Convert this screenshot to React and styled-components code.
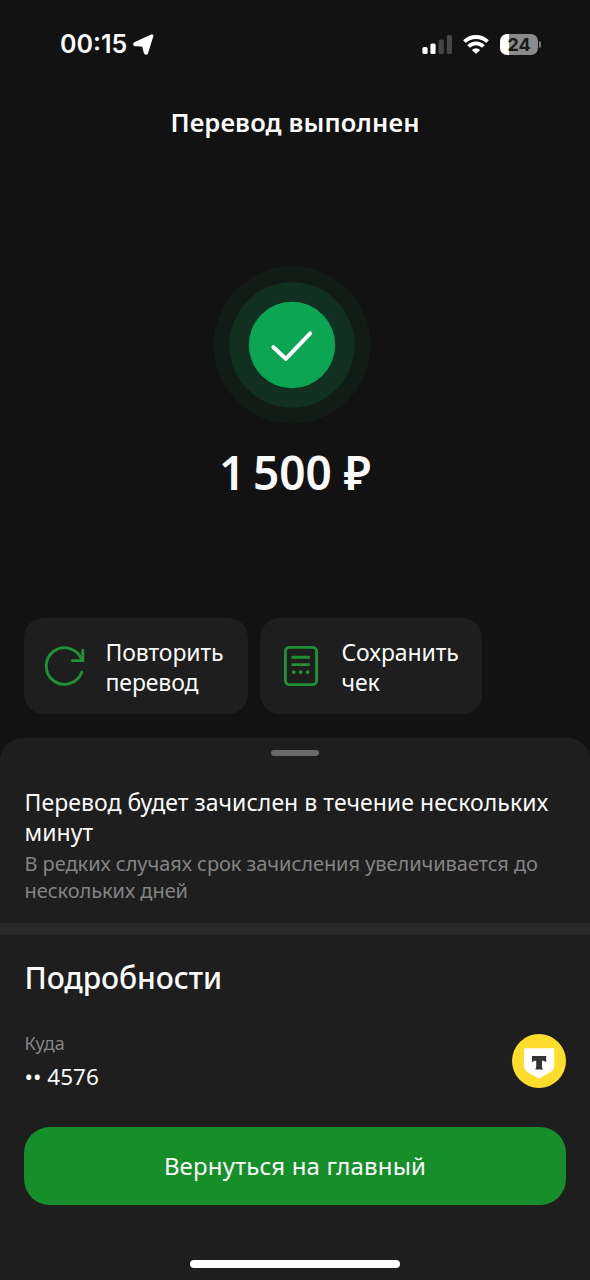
import styled, { createGlobalStyle } from 'styled-components';

const GlobalStyle = createGlobalStyle`
	:root {
		--page-color: #121212;
		--surface-color: #1e1e1e;
		--divider-color: #292929;
		--accent-color: #168f2a;
		--icon-color: #1f9134;
		--white-color: #fafafa;
		--muted-color: #848484;
	}

	* {
		box-sizing: border-box;
	}

	body {
		margin: 0;
		background-color: var(--page-color);
		font-family: 'Noto Sans', sans-serif;
	}
`;

const Screen = styled.div`
	display: flex;
	flex-direction: column;
	width: 590px;
	height: 1280px;
	overflow: hidden;
	color: var(--white-color);
	background-color: var(--page-color);
`;

const Text = styled.div`
	margin: 0;
	font-size: ${(props) => props.$size}px;
	line-height: ${(props) => props.$line}px;
	font-weight: ${(props) => props.$weight || 400};
	letter-spacing: ${(props) => props.$spacing || 0}px;
	color: ${(props) => (props.$muted ? 'var(--muted-color)' : 'inherit')};
	white-space: nowrap;
`;

const StatusBar = styled.div`
	display: flex;
	align-items: center;
	justify-content: space-between;
	height: 88px;
	padding: 0 49px 0 60px;
`;

const StatusGroup = styled.div`
	display: flex;
	align-items: center;
	gap: ${(props) => props.$gap}px;
`;

const Clock = styled(Text)`
	font-family: Inter, sans-serif;
`;

const Battery = styled.div`
	display: flex;
	align-items: center;
	gap: 1px;
`;

const BatteryBody = styled.div`
	width: 38px;
	height: 21px;
	border-radius: 7px;
	background: linear-gradient(90deg, #fff ${(props) => props.$level}%, #8b8b8b ${(props) => props.$level}%);
	color: #1a1a1a;
	font: 700 18px/21px Inter, sans-serif;
	text-align: center;
`;

const BatteryCap = styled.div`
	width: 2px;
	height: 7px;
	border-radius: 0 3px 3px 0;
	background-color: #777;
`;

const Header = styled.header`
	display: flex;
	justify-content: center;
	height: 178px;
	padding-top: 16px;
`;

const Result = styled.section`
	display: flex;
	flex-direction: column;
	align-items: center;
	height: 352px;
`;

const ResultBadge = styled.svg`
	margin-right: 6px;
`;

const Amount = styled(Text)`
	margin-top: 19px;
`;

const Actions = styled.div`
	display: flex;
	gap: 12px;
	height: 120px;
	padding: 0 24px 24px;
`;

const ActionButton = styled.button`
	display: flex;
	align-items: center;
	gap: 19.5px;
	width: ${(props) => props.$width}px;
	height: 96px;
	padding: 0 0 0 20px;
	border: none;
	border-radius: 20px;
	text-align: left;
	font-family: inherit;
	color: inherit;
	background-color: var(--surface-color);
	cursor: pointer;
`;

const ActionLabel = styled(Text)`
	padding-top: 2px;
`;

const Sheet = styled.main`
	display: flex;
	flex-direction: column;
	flex: 1;
	border-radius: 22px 22px 0 0;
	background-color: var(--surface-color);
`;

const Handle = styled.div`
	width: 48px;
	height: 6px;
	margin: 12px auto 0;
	border-radius: 3px;
	background-color: #6b6a6b;
`;

const Notice = styled.section`
	height: 167px;
	padding: 31px 24px 0 24.5px;
`;

const NoticeHint = styled.div`
	margin-top: 3px;
`;

const Divider = styled.div`
	height: 12px;
	background-color: var(--divider-color);
`;

const Details = styled.section`
	height: 192px;
	padding: 23px 24px 0 24.5px;
`;

const DetailRow = styled.div`
	display: flex;
	align-items: flex-start;
	justify-content: space-between;
	margin-top: 32px;
`;

const BankBadge = styled.svg`
	margin-top: 4px;
`;

const MainButton = styled.button`
	display: flex;
	align-items: center;
	justify-content: center;
	height: 78px;
	margin: 0 24px;
	padding: 0;
	border: none;
	border-radius: 26px;
	font-family: inherit;
	color: inherit;
	background-color: var(--accent-color);
	cursor: pointer;
`;

const HomeIndicator = styled.div`
	width: 210px;
	height: 8px;
	margin: auto auto 12px;
	border-radius: 4px;
	background-color: #fff;
`;

const LocationIcon = () => (
	<svg width="21" height="21" viewBox="0 0 20 20">
		<path
			d="M18 1.8 1.8 9.2c-.4.3-.3.9.2.9l7.6.6c.3 0 .5.2.5.5l1.7 6.7c.2.6.9.6 1.1.1Z"
			fill="#fff"
			stroke="#fff"
			strokeWidth="2.9"
			strokeLinejoin="round"
		/>
	</svg>
);

const SignalIcon = () => (
	<svg width="30" height="19" viewBox="0 0 30 19">
		<rect x="0.4" y="12" width="5.2" height="7" rx="1.6" fill="#fff" />
		<rect x="8.4" y="8.5" width="5.2" height="10.5" rx="1.6" fill="#fff" />
		<rect x="16.6" y="4.5" width="5.2" height="14.5" rx="1.6" fill="#464646" />
		<rect x="24.8" y="0" width="5.2" height="19" rx="1.6" fill="#464646" />
	</svg>
);

const WifiIcon = () => (
	<svg width="26" height="19" viewBox="0 0 26 19">
		<g fill="none" stroke="#fff" strokeWidth="3.9">
			<path d="M1.5 6.7a16.3 16.3 0 0 1 23 0" />
			<path d="M5.6 11.5a10.4 10.4 0 0 1 14.8 0" />
		</g>
		<path d="M13 18.9 8.9 14.9a5.8 5.8 0 0 1 8.2 0Z" fill="#fff" />
	</svg>
);

const RepeatIcon = () => (
	<svg width="42" height="42" viewBox="0 0 42 42" fill="none" stroke="var(--icon-color)" strokeWidth="2.9">
		<path d="M37.8 27A18.3 18.3 0 1 1 37.8 15" strokeLinecap="round" />
		<path d="M38.8 5.2V15.6H28.2" strokeLinecap="round" />
	</svg>
);

const ReceiptIcon = () => (
	<svg width="42" height="42" viewBox="0 0 42 42" fill="none" stroke="var(--icon-color)">
		<rect x="5.4" y="2.4" width="31.2" height="37.2" rx="4" strokeWidth="2.9" />
		<path d="M11.6 12.3h18.2M11.6 19.6h18.2" strokeWidth="2.9" />
		<path d="M13.8 27.2h.01M20.7 27.2h.01M27.6 27.2h.01" strokeWidth="3.8" strokeLinecap="round" />
	</svg>
);

const BankLogo = () => (
	<BankBadge width="54" height="54" viewBox="0 0 54 54">
		<circle cx="27" cy="27" r="27" fill="#ffdd2d" />
		<path d="M12 14.2h30.2v17.2c0 3.3-1.6 5.6-4.3 7.2L27 44.8l-10.8-6.2c-2.7-1.6-4.2-3.9-4.2-7.2Z" fill="#fff" />
		<path
			d="M20 22v6.4c.8-1 2.2-1.6 3.8-1.6h.4V32c0 1.5-.4 2.8-1 3.4h7.9c-.7-.6-1.1-1.9-1.1-3.4v-5.2h.4c1.6 0 3 .6 3.8 1.6V22Z"
			fill="#333"
		/>
	</BankBadge>
);

const actions = [
	{ id: 'repeat', width: 224, icon: RepeatIcon, lines: ['Повторить', 'перевод'] },
	{ id: 'save', width: 222, icon: ReceiptIcon, lines: ['Сохранить', 'чек'] },
];

const App = () => {
	return (
		<Screen>
			<GlobalStyle />
			<StatusBar>
				<StatusGroup $gap={6}>
					<Clock $size={25} $line={30} $weight={600}>
						00:15
					</Clock>
					<LocationIcon />
				</StatusGroup>
				<StatusGroup $gap={11}>
					<SignalIcon />
					<WifiIcon />
					<Battery>
						<BatteryBody $level={24}>24</BatteryBody>
						<BatteryCap />
					</Battery>
				</StatusGroup>
			</StatusBar>

			<Header>
				<Text as="h1" $size={25.5} $line={36} $weight={600} $spacing={0.12}>
					Перевод выполнен
				</Text>
			</Header>

			<Result>
				<ResultBadge width="158" height="158" viewBox="0 0 158 158">
					<circle cx="79" cy="79" r="78.5" fill="#121c17" />
					<circle cx="79" cy="79" r="62.7" fill="#113020" />
					<circle cx="79" cy="79" r="43.2" fill="#0ba553" />
					<path
						d="m60.4 81.2 12.4 11.6 24.4-25.4"
						fill="none"
						stroke="#fff"
						strokeWidth="4"
						strokeLinecap="round"
						strokeLinejoin="round"
					/>
				</ResultBadge>
				<Amount $size={46} $line={58} $weight={600}>
					1{'\u2009'}500 ₽
				</Amount>
			</Result>

			<Actions>
				{actions.map(({ id, width, icon: Icon, lines }) => (
					<ActionButton key={id} type="button" $width={width}>
						<Icon />
						<ActionLabel $size={23} $line={30} $weight={450} $spacing={-0.1}>
							{lines[0]}
							<br />
							{lines[1]}
						</ActionLabel>
					</ActionButton>
				))}
			</Actions>

			<Sheet>
				<Handle />
				<Notice>
					<Text $size={23} $line={30} $weight={450} $spacing={0.05}>
						Перевод будет зачислен в течение нескольких
						<br />
						минут
					</Text>
					<NoticeHint>
						<Text $size={20} $line={27} $spacing={-0.05} $muted>
							В редких случаях срок зачисления увеличивается до
							<br />
							нескольких дней
						</Text>
					</NoticeHint>
				</Notice>
				<Divider />
				<Details>
					<Text $size={30} $line={40} $weight={500} $spacing={-0.1}>
						Подробности
					</Text>
					<DetailRow>
						<div>
							<Text $size={18} $line={27} $muted>
								Куда
							</Text>
							<Text $size={22.5} $line={40} $weight={450}>
								•• 4576
							</Text>
						</div>
						<BankLogo />
					</DetailRow>
				</Details>
				<MainButton type="button">
					<Text $size={24} $line={32} $weight={450} $spacing={0.15}>
						Вернуться на главный
					</Text>
				</MainButton>
				<HomeIndicator />
			</Sheet>
		</Screen>
	);
};

export default App;
